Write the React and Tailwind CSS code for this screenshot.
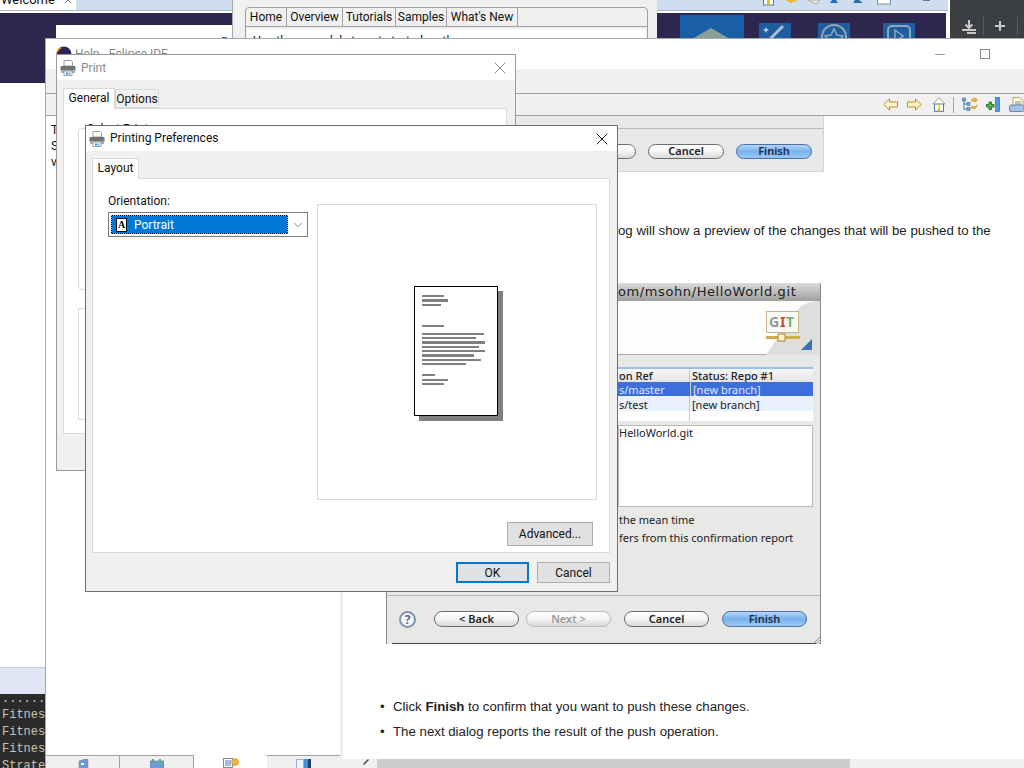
import { ChevronDown, X } from "lucide-react";

const ui = { fontFamily: 'Roboto, sans-serif' };
const mac = { fontFamily: '"Noto Sans", sans-serif' };

const previewLines = [
  [9, 22, 2], [13, 26, 3], [18, 19, 2], [39, 22, 2], [47, 62, 2], [51, 54, 2], [55, 63, 3],
  [60, 57, 2], [64, 63, 2], [68, 52, 3], [73, 59, 2], [77, 44, 2], [88, 13, 2], [93, 26, 2], [97, 22, 2],
];

const PrinterIcon = ({ className }) => (
  <svg viewBox="0 0 16 16" className={className}>
    <path d="M4 .5h7l1.5 1.5v4h-8.5z" fill="#fff" stroke="#9a9a9a" />
    <rect x="0.5" y="6" width="15" height="5" rx="1" fill="#6f7377" />
    <rect x="1" y="10" width="14" height="3" fill="#a9adb1" />
    <rect x="14" y="8" width="1.5" height="1.5" fill="#67c04d" />
    <rect x="4" y="11" width="8" height="4.5" fill="#fff" stroke="#8a8a8a" strokeWidth="0.8" />
    <rect x="6" y="12.5" width="2" height="2" fill="#2f8ad8" />
    <rect x="8.5" y="12.5" width="2" height="2" fill="#59a9e6" />
  </svg>
);

const MacButton = ({ children, className = "", disabled = false }) => (
  <div
    className={`flex items-center justify-center rounded-full border bg-linear-to-b from-[#ffffff] via-[#f4f4f4] to-[#d9d9d9] text-[11px] font-semibold ${
      disabled ? "border-[#b9b9b9] text-[#9a9a9a]" : "border-[#6d6d6d] text-[#222]"
    } ${className}`}
  >
    {children}
  </div>
);

const FinishButton = ({ className = "" }) => (
  <div
    className={`flex items-center justify-center rounded-full border border-[#4c6fa8] bg-linear-to-b from-[#b5d5f7] via-[#78b2ee] to-[#9cc8f4] text-[11px] font-semibold text-[#1c2c44] ${className}`}
  >
    Finish
  </div>
);

const WinButton = ({ children, className = "" }) => (
  <div className={`flex items-center justify-center bg-[#e1e1e1] text-xs text-[#111] ${className}`}>
    {children}
  </div>
);

const BannerIcons = () => (
  <svg viewBox="0 0 270 26" className="h-[26px] w-[270px]">
    <rect x="0" y="2" width="64" height="24" fill="#1a5ea5" />
    <path d="M12 26 L31 15 L50 26z" fill="#88a09a" />
    <rect x="79" y="10" width="32" height="16" fill="#1f5d9f" />
    <path d="M90 26 L103 13" stroke="#a9c1cc" strokeWidth="3" />
    <path d="M86 14l1 2 2 1-2 1-1 2-1-2-2-1 2-1z" fill="#b9ccd8" />
    <rect x="138" y="10" width="32" height="16" fill="#1f5d9f" />
    <circle cx="154" cy="24" r="12" fill="none" stroke="#8fa7b4" strokeWidth="2" />
    <path d="M154 16l3 6 6 1-4 5h-10l-4-5 6-1z" fill="none" stroke="#8fa7b4" strokeWidth="1.5" />
    <rect x="203" y="10" width="32" height="16" fill="#1f5d9f" />
    <rect x="208" y="13" width="22" height="18" rx="4" fill="none" stroke="#8fa7b4" strokeWidth="2" />
    <path d="M215 17l8 6-8 6z" fill="none" stroke="#8fa7b4" strokeWidth="1.5" />
  </svg>
);

const HelpToolbar = () => (
  <div className="flex h-[22px] shrink-0 items-center justify-end border-b border-[#a0a0a0] bg-[#f0f0f0]">
    <svg viewBox="0 0 15 13" className="h-[13px] w-[15px]">
      <path d="M.8 6.5 6.5 1v3h8v5h-8v3z" fill="#fff6d8" stroke="#c48a1a" />
    </svg>
    <svg viewBox="0 0 15 13" className="ml-[9px] h-[13px] w-[15px]">
      <path d="M14.2 6.5 8.5 1v3h-8v5h8v3z" fill="#fff2c8" stroke="#c48a1a" />
    </svg>
    <svg viewBox="0 0 14 15" className="ml-[10px] h-[15px] w-[14px]">
      <path d="M7 .8.8 7H2.5v7.2h9V7h1.7z" fill="#fff" stroke="#a89a7a" />
      <rect x="2.5" y="7" width="9" height="7.2" fill="#fff" stroke="#4f78ad" />
      <rect x="6" y="7" width="2" height="1.6" fill="#d8c820" />
      <rect x="6" y="9.5" width="2" height="4.5" fill="#d8c820" />
    </svg>
    <div className="ml-[7px] h-[16px] w-px bg-[#a0a0a0]" />
    <svg viewBox="0 0 16 15" className="ml-[8px] h-[15px] w-[16px]">
      <path d="M2 3v10M2 7h4M2 12h4" stroke="#4f78ad" fill="none" />
      <rect x="0.5" y="1" width="3" height="3" fill="#7aa0cc" stroke="#4f78ad" strokeWidth="0.7" />
      <rect x="5" y="5.5" width="3" height="3" fill="#7aa0cc" stroke="#4f78ad" strokeWidth="0.7" />
      <rect x="5" y="10.5" width="3" height="3" fill="#7aa0cc" stroke="#4f78ad" strokeWidth="0.7" />
      <path d="M9 4c1-3 5-4 6-1l-1 2-3-1zM15 8c0 3-3 5-6 3l1-2 3 1z" fill="#eeb53a" stroke="#c48a1a" strokeWidth="0.6" />
    </svg>
    <svg viewBox="0 0 14 15" className="ml-[8px] h-[15px] w-[14px]">
      <rect x="9.5" y="0.5" width="4" height="14" fill="#4d9ae6" stroke="#2a6cb3" strokeWidth="0.7" />
      <path d="M3 5h2.5v2.5H8V10H5.5v2.5H3V10H.5V7.5H3z" fill="#58b84a" stroke="#0d5e10" strokeWidth="0.8" />
    </svg>
    <svg viewBox="0 0 15 15" className="ml-[9px] h-[15px] w-[15px]">
      <path d="M4 .5h7l3 3v6H4z" fill="#fff7dc" stroke="#b8a777" />
      <path d="M6 5h6M6 7h6" stroke="#7f8aa0" />
      <rect x="0.5" y="8" width="14.5" height="6.5" rx="1.5" fill="#a7c1e4" stroke="#6f86a8" />
    </svg>
  </div>
);

const BottomTab = ({ active, children, last }) => (
  <div
    className={`flex h-[13px] flex-1 justify-center overflow-hidden pt-[3px] ${
      active ? "bg-white" : "border-t border-[#a0a0a0] bg-[#f0f0f0]"
    } ${last || active ? "" : "border-r"} border-[#a0a0a0]`}
  >
    {children}
  </div>
);

const TopImage = () => (
  <div className="ml-[43px] h-[56px] w-[438px] shrink-0 border-r border-b border-[#d4d4d4] bg-[#e8e8e6]" style={mac}>
    <div className="h-[13px] border-b border-[#b9b9b7]" />
    <div className="flex justify-end gap-3 pt-[15px] pr-[11px]">
      <MacButton className="h-[15px] w-[76px]" />
      <MacButton className="h-[15px] w-[76px]">Cancel</MacButton>
      <FinishButton className="h-[15px] w-[76px]" />
    </div>
  </div>
);

const PushDialog = () => (
  <div className="ml-[43px] flex h-[361px] w-[435px] shrink-0 flex-col border-r border-l border-[#8c8c8c] bg-[#e8e8e6] text-[11px] text-[#222]" style={mac}>
    <div className="flex h-[18px] shrink-0 items-center bg-linear-to-b from-[#dcdcdc] to-[#9f9f9d] pl-[231px] font-['DejaVu_Sans'] text-[13px] tracking-[0.6px] text-[#1c1c1c]">
      om/msohn/HelloWorld.git
    </div>
    <div className="flex h-[54px] shrink-0 items-center justify-end border-b border-[#a9a9a9] bg-[#fdfdfb]">
      <svg viewBox="0 0 62 54" className="h-[54px] w-[62px]">
        <path d="M8 54 L40 8 Q48 0 62 0 V54z" fill="#dededc" />
        <rect x="8.5" y="10.5" width="32" height="21" fill="#f7f9f4" stroke="#c7b48e" />
        <text x="11" y="26" fontSize="14" fontWeight="700" fill="#999">G</text>
        <text x="22" y="26" fontSize="14" fontWeight="700" fill="#c94a3a">I</text>
        <text x="28" y="26" fontSize="14" fontWeight="700" fill="#7ab07a">T</text>
        <rect x="8" y="35" width="34" height="3" fill="#d0b04a" />
        <rect x="20" y="33" width="7" height="7" fill="#fff3c8" stroke="#a8862a" />
        <path d="M43 49 L54 38 V49z" fill="#3d6fb0" />
      </svg>
    </div>
    <div className="ml-[231px] mt-[12px] w-[195px] shrink-0 border-t-2 border-[#9cc0e4] bg-white">
      <div className="grid grid-cols-[72px_1fr]">
        <div className="flex h-[13px] items-center border-r border-[#c9c9c9] bg-linear-to-b from-[#f8f8f8] to-[#e3e3e3] pt-[2px] pl-[1px] font-medium">on Ref</div>
        <div className="flex h-[13px] items-center bg-linear-to-b from-[#f8f8f8] to-[#e3e3e3] pt-[2px] pl-[2px] font-medium">Status: Repo #1</div>
        <div className="flex h-[14px] items-center bg-[#3d6fdc] pt-[3px] pl-[1px] text-[#dfe8fa]">s/master</div>
        <div className="flex h-[14px] items-center border-l border-[#c9c9c9] bg-[#3d6fdc] pt-[3px] pl-[2px] text-[#dfe8fa]">[new branch]</div>
        <div className="flex h-[15px] items-center border-r border-[#c9c9c9] bg-[#e9f1fc] pt-[3px] pl-[1px]">s/test</div>
        <div className="flex h-[15px] items-center bg-[#e9f1fc] pt-[3px] pl-[2px]">[new branch]</div>
        <div className="h-[10px] border-r border-[#c9c9c9]" />
        <div className="h-[10px]" />
      </div>
    </div>
    <div className="ml-[231px] mt-[4px] h-[82px] w-[195px] shrink-0 border border-[#b9b9b9] bg-white leading-[14px]">HelloWorld.git</div>
    <div className="mt-[4px] flex h-[18px] shrink-0 items-center pl-[232px]">the mean time</div>
    <div className="flex h-[18px] shrink-0 items-center pl-[232px]">fers from this confirmation report</div>
    <div className="mt-[48px] flex h-[47px] shrink-0 items-start border-t border-[#b5b5b5] pt-[15px] pl-[12px]">
      <div className="flex h-[17px] w-[17px] items-center justify-center rounded-full border-2 border-[#7f93b5] bg-[#f4f6fa] text-xs font-bold text-[#54698f]">?</div>
      <MacButton className="ml-[18px] h-[16px] w-[85px]">&lt; Back</MacButton>
      <MacButton disabled className="ml-[7px] h-[16px] w-[85px]">Next &gt;</MacButton>
      <MacButton className="ml-[13px] h-[16px] w-[85px]">Cancel</MacButton>
      <FinishButton className="ml-[13px] h-[16px] w-[85px]" />
    </div>
    <div className="relative mt-auto ml-[5px] h-px w-[424px] bg-[#444]">
      <svg viewBox="0 0 10 10" className="absolute right-[-5px] bottom-0 h-[10px] w-[10px]">
        <path d="M2 10 10 2M5 10l5-5M8 10l2-2" stroke="#8f8f8f" />
      </svg>
    </div>
  </div>
);

export default function App() {
  return (
    <div className="relative h-[768px] w-[1024px] overflow-hidden bg-white text-[#111]" style={ui}>
      {/* workbench behind everything */}
      <div className="absolute top-0 left-0 h-[11px] w-[948px] border-b border-[#a9b5c8] bg-[#cfdeef]">
        <div className="-mt-[12px] flex h-[23px] w-[76px] items-center pl-px text-[13px]">
          <div className="absolute top-0 left-0 h-[10px] w-[76px] bg-white" />
          <span className="relative">Welcome</span>
          <X size={12} className="relative ml-[7px] text-[#777]" />
        </div>
      </div>
      <svg viewBox="0 0 170 6" className="absolute top-0 left-[760px] h-[6px] w-[170px]">
        <rect x="3.5" y="-1" width="10" height="6" fill="#fff" stroke="#4f78ad" />
        <rect x="7" y="0" width="3" height="5" fill="#d8c820" />
        <path d="M25 0h13l-7 3z" fill="#eeb53a" />
        <path d="M48 0h12l-4 4z" fill="#e8e8e8" stroke="#aaa" />
        <path d="M70 3l2-3 4 0 2 3z" fill="#2a6cb3" />
        <path d="M93 3l2-3 4 0 4 3z" fill="#2a6cb3" />
        <rect x="117.5" y="-1" width="13" height="5" fill="#fff" stroke="#7a8da8" />
        <rect x="163" y="0" width="7" height="1" fill="#777" />
      </svg>
      <div className="absolute top-[13px] left-0 h-[70px] w-[946px] bg-[#2d2750]">
        <div className="absolute top-0 left-[680px]">
          <BannerIcons />
        </div>
      </div>
      <div className="absolute top-[25px] left-[56px] h-[14px] w-[176px] bg-white" />
      <div className="absolute top-[38px] left-[60px] h-px w-[25px] bg-[#1a6fc0]" />
      <div className="absolute top-[37px] left-[222px] h-[2px] w-[5px] bg-[#1a6fc0]" />

      {/* right side view */}
      <div className="absolute top-0 left-[950px] flex h-[39px] w-[74px] items-center bg-[#3c3f41] pt-[12px] pl-[11px] text-[#c8c8c8]">
        <svg viewBox="0 0 16 16" className="h-4 w-4">
          <path d="M8 2v7M4.5 6.5 8 10l3.5-3.5M1 12h14M6 15h9" stroke="#c8c8c8" strokeWidth="2" fill="none" />
        </svg>
        <div className="ml-[6px] h-[18px] w-px bg-[#5a5d5f]" />
        <svg viewBox="0 0 16 16" className="ml-[8px] h-4 w-4">
          <path d="M8 3v10M3 8h10" stroke="#c8c8c8" strokeWidth="2" />
        </svg>
        <div className="ml-[9px] h-[18px] w-px bg-[#5a5d5f]" />
      </div>

      {/* intro window peeking out at the top */}
      <div className="absolute top-0 left-[232px] h-[39px] w-[425px] border-l border-[#a9a9a9] bg-[#f0f0f0] pt-[7px] pl-[12px]">
        <div className="h-[40px] w-[403px] rounded-t-[4px] border border-[#a0a0a0]">
          <div className="flex h-[19px] border-b border-[#a0a0a0] text-xs">
            <div className="flex w-[41px] items-center justify-center border-r border-[#a0a0a0]">Home</div>
            <div className="flex w-[56px] items-center justify-center border-r border-[#a0a0a0]">Overview</div>
            <div className="flex w-[53px] items-center justify-center border-r border-[#a0a0a0]">Tutorials</div>
            <div className="flex w-[51px] items-center justify-center border-r border-[#a0a0a0]">Samples</div>
            <div className="flex w-[71px] items-center justify-center border-r border-[#a0a0a0]">What's New</div>
          </div>
          <div className="mx-px mt-[2px] h-[20px] bg-white pt-[4px] pl-[6px] text-xs">Use these models to get started on the</div>
        </div>
      </div>

      {/* left console and list */}
      <div className="absolute top-[667px] left-0 h-[28px] w-[45px] border-t border-[#c9c9c9] bg-[#e0e6f5]" />
      <div className="absolute top-[694px] left-0 h-[74px] w-[45px] overflow-hidden bg-[#2b2b2b] pt-[2px] pl-[2px] text-xs leading-[17px] text-[#c6c6b4]" style={{ fontFamily: '"Liberation Mono", monospace' }}>
        <div className="mb-[5px] h-[6px] leading-[6px]">......</div>
        <div>Fitness</div>
        <div>Fitness</div>
        <div>Fitness</div>
        <div>Strategy</div>
      </div>

      {/* Help window */}
      <div className="absolute top-[38px] right-0 bottom-0 left-[45px] flex flex-col border-t border-l border-[#a9a9a9] bg-white">
        <div className="flex h-[30px] shrink-0 items-center bg-white pl-[10px] text-xs text-[#888]">
          <svg viewBox="0 0 16 16" className="h-4 w-4">
            <circle cx="8" cy="8" r="7.5" fill="#2c2255" />
            <path d="M1 6a7.5 7.5 0 0 1 4-4.5" stroke="#f7941e" strokeWidth="1.5" fill="none" />
          </svg>
          <span className="ml-[3px]">Help - Eclipse IDE</span>
          <div className="ml-auto h-px w-[10px] bg-[#999]" />
          <div className="mr-[34px] ml-[35px] h-[10px] w-[10px] border border-[#888]" />
        </div>
        <div className="h-[25px] shrink-0 border-b border-[#a0a0a0] bg-[#f0f0f0]" />
        <HelpToolbar />
        <div className="flex min-h-0 flex-1">
          <div className="flex w-[294px] shrink-0 flex-col">
            <div className="flex-1 pt-[6px] pl-[5px] text-xs leading-4">
              <div>T</div>
              <div>S</div>
              <div>v</div>
            </div>
            <div className="flex">
              <BottomTab>
                <svg viewBox="0 0 12 10" className="h-[10px] w-3"><path d="M2 10V2l6-2h3v10z" fill="#6f98cc" stroke="#8f8f8f" strokeWidth="0.6" /><rect x="4" y="4" width="3" height="2" fill="#fff" /></svg>
              </BottomTab>
              <BottomTab>
                <svg viewBox="0 0 14 10" className="h-[10px] w-[14px]"><rect x="0" y="2" width="14" height="8" fill="#6c9ed0" stroke="#4f78ad" strokeWidth="0.6" /><path d="M2 0h2v3H2zM9 0h2v3H9z" fill="#58b84a" /></svg>
              </BottomTab>
              <BottomTab active>
                <svg viewBox="0 0 16 10" className="h-[10px] w-4"><rect x="0.5" y="0.5" width="9" height="9" fill="#fff" stroke="#7f8aa0" /><path d="M2 3h6M2 5h6M2 7h6" stroke="#4f78ad" /><circle cx="12" cy="4" r="3.5" fill="#eeb53a" stroke="#c48a1a" strokeWidth="0.6" /></svg>
              </BottomTab>
              <BottomTab last>
                <svg viewBox="0 0 16 10" className="h-[10px] w-4"><rect x="0.5" y="0.5" width="7" height="9.5" fill="#eef3fa" stroke="#9ab0cc" /><rect x="8" y="0" width="4" height="10" fill="#3f8fe0" /><rect x="12" y="0" width="3" height="10" fill="#2a3e5a" /></svg>
              </BottomTab>
            </div>
          </div>
          <div className="flex min-w-0 flex-1 flex-col">
            <div className="flex min-h-0 flex-1 flex-col border-l-[3px] border-[#f0f0f0] text-[13.25px] text-[#222]" style={{ fontFamily: '"Liberation Sans", sans-serif' }}>
              <TopImage />
              <div className="mt-[50px] h-[18px] shrink-0 pl-[275px] leading-[18px]">og will show a preview of the changes that will be pushed to the</div>
              <div className="mt-[43px]">
                <PushDialog />
              </div>
              <ul className="mt-[54px] shrink-0 pl-[50px] leading-[18px]">
                <li className="relative">
                  <span className="absolute top-0 -left-[13px]">•</span>
                  Click <b>Finish</b> to confirm that you want to push these changes.
                </li>
                <li className="relative mt-[7px]">
                  <span className="absolute top-0 -left-[13px]">•</span>
                  The next dialog reports the result of the push operation.
                </li>
              </ul>
            </div>
            <div className="flex h-[9px] shrink-0 items-start overflow-hidden bg-[#f0f0f0]">
              <svg viewBox="0 0 10 9" className="ml-[20px] h-[9px] w-[10px]"><path d="M8 0 3 5l1 1 5-5z" fill="#444" /></svg>
              <div className="ml-[7px] h-[9px] w-[473px] bg-[#cdcdcd]" />
            </div>
          </div>
        </div>
      </div>

      {/* Print dialog */}
      <div className="absolute top-[54px] left-[56px] flex h-[417px] w-[460px] flex-col border border-[#9a9a9a] bg-[#f0f0f0]">
        <div className="flex h-[25px] shrink-0 items-center bg-white pl-[3px] text-xs text-[#8a8a8a]">
          <PrinterIcon className="h-4 w-4" />
          <span className="ml-[5px]">Print</span>
          <X size={20} strokeWidth={1} className="mr-[5px] ml-auto text-[#777]" />
        </div>
        <div className="flex h-[28px] shrink-0 items-end pl-[6px] text-xs">
          <div className="z-10 -mb-px flex h-[21px] w-[52px] items-center justify-center border border-b-0 border-[#d9d9d9] bg-white pb-[2px]">General</div>
          <div className="flex h-[19px] w-[44px] items-center justify-center border border-[#d9d9d9] bg-[#f0f0f0]">Options</div>
        </div>
        <div className="ml-[6px] flex h-[326px] w-[444px] flex-col border border-[#d9d9d9] bg-white px-[14px] pt-[19px]">
          <div className="h-[162px] rounded-sm border border-[#d9d9d9] pl-2 text-xs">
            <span className="-mt-2 block leading-4">Select Printer</span>
          </div>
          <div className="mt-[18px] h-[112px] border border-[#d9d9d9]" />
        </div>
      </div>

      {/* Printing Preferences dialog */}
      <div className="absolute top-[125px] left-[85px] flex h-[467px] w-[533px] flex-col border border-[#6e6e6e] bg-[#f0f0f0] text-xs">
        <div className="flex h-[25px] shrink-0 items-center bg-white pl-[3px]">
          <PrinterIcon className="h-4 w-4" />
          <span className="ml-[5px] pb-[2px]">Printing Preferences</span>
          <X size={20} strokeWidth={1.1} className="mr-[5px] ml-auto text-[#111]" />
        </div>
        <div className="flex h-[27px] shrink-0 items-end pl-[6px]">
          <div className="z-10 -mb-px flex h-[21px] w-[47px] items-center justify-center border border-b-0 border-[#d9d9d9] bg-white pb-[2px]">Layout</div>
        </div>
        <div className="ml-[6px] flex h-[375px] w-[518px] gap-[9px] border border-[#d9d9d9] bg-white pt-[25px] pl-[15px]">
          <div className="-mt-[11px] w-[200px] shrink-0">
            <div className="leading-[16px]">Orientation:</div>
            <div className="mt-[3px] flex h-[25px] items-center border border-[#7a7a7a] pl-[2px]">
              <div className="h-[19px] w-[177px] border border-dotted border-[#ff9a00] bg-black">
                <div className="flex h-full items-center bg-[#0078d7] pl-[4px] text-white">
                  <div className="flex h-[14px] w-[11px] items-center justify-center border border-[#111] bg-white font-['Liberation_Serif'] text-[10px] font-bold leading-none text-black">A</div>
                  <span className="ml-[7px]">Portrait</span>
                </div>
              </div>
              <ChevronDown size={14} strokeWidth={1.2} className="ml-[3px] text-[#555]" />
            </div>
          </div>
          <div className="flex h-[296px] w-[280px] items-center justify-center border border-[#d9d9d9] pt-[3px] pl-[2px]">
            <svg viewBox="0 0 89 135" className="h-[135px] w-[89px]">
              <rect x="5" y="5" width="84" height="130" fill="#808080" />
              <rect x="0.5" y="0.5" width="83" height="129" fill="#fff" stroke="#000" />
              {previewLines.map(([y, w, h], i) => (
                <rect key={i} x="8" y={y} width={w} height={h} fill="#808080" />
              ))}
            </svg>
          </div>
        </div>
        <div className="relative flex flex-1 items-start justify-end gap-2 pt-[9px] pr-[7px]">
          <WinButton className="absolute -top-[31px] right-[24px] h-[24px] w-[86px] border border-[#adadad]">Advanced...</WinButton>
          <WinButton className="h-[21px] w-[73px] border-2 border-[#0078d7]">OK</WinButton>
          <WinButton className="h-[21px] w-[73px] border border-[#adadad]">Cancel</WinButton>
        </div>
      </div>
    </div>
  );
}
